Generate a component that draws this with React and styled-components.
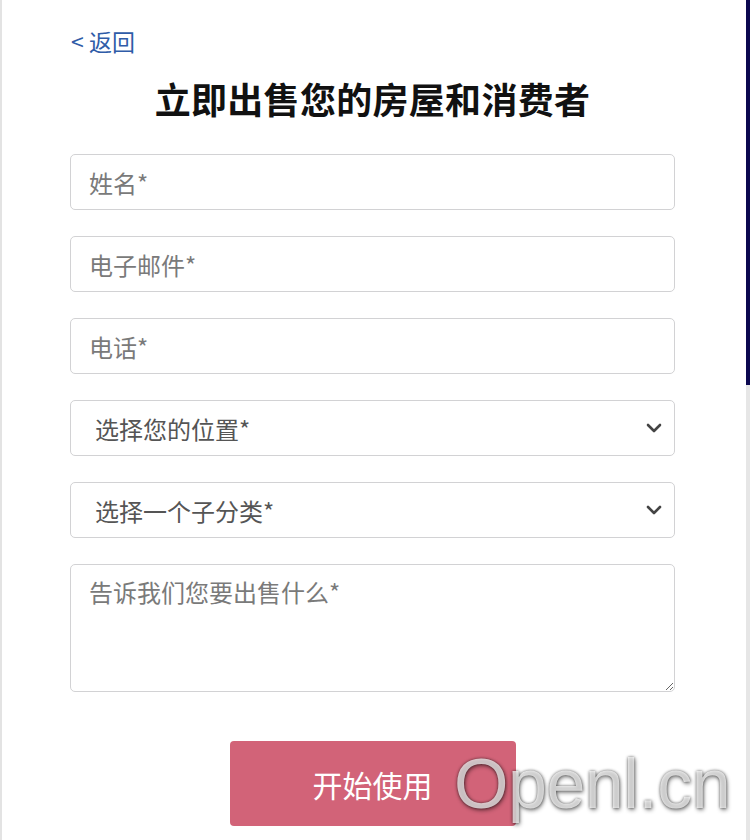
import React from "react";
import styled, { createGlobalStyle } from "styled-components";

const Global = createGlobalStyle`
  html, body { margin: 0; padding: 0; background: #fff; }
  body { font-family: "Noto Sans CJK SC", "Noto Sans", sans-serif; }
  * { box-sizing: border-box; }
`;

const Frame = styled.div`
  display: flex;
  width: 750px;
  height: 840px;
  overflow: hidden;
  position: relative;
  background: #fff;
  border-left: 2px solid #e3e3e3;
`;

const Main = styled.main`
  flex: 1;
  display: flex;
  flex-direction: column;
  padding: 28px 0 0 68px;
`;

const Rail = styled.div`
  width: 4px;
  display: flex;
  flex-direction: column;
`;

const RailSeg = styled.div`
  height: ${(p) => (p.$h ? `${p.$h}px` : "auto")};
  flex: ${(p) => (p.$h ? "none" : "1")};
  background: ${(p) => p.$c};
`;

const Back = styled.a`
  font-size: 23px;
  line-height: 26px;
  color: #2f5ca8;
  text-decoration: none;
  align-self: flex-start;
  margin-left: 1px;
`;

const Title = styled.h1`
  margin: 22px 0 0;
  width: 605px;
  text-align: center;
  font-size: 36px;
  line-height: 44px;
  font-weight: 700;
  color: #111;
  letter-spacing: 0.3px;
`;

const Form = styled.form`
  width: 605px;
  margin-top: 34px;
  display: flex;
  flex-direction: column;
  gap: 26px;
`;

const fieldBase = `
  width: 100%;
  border: 1px solid #d2d2d4;
  border-radius: 5px;
  background: #fff;
  font-family: "Noto Sans CJK SC", "Noto Sans", sans-serif;
  font-size: 24px;
  color: #444;
  outline: none;
`;

const Input = styled.input`
  ${fieldBase}
  height: 56px;
  padding: 0 18px;
  &::placeholder { color: #7a7a7a; }
`;

const SelectWrap = styled.div`
  position: relative;
  height: 56px;
`;

const Select = styled.select`
  ${fieldBase}
  height: 56px;
  padding: 0 40px 0 24px;
  appearance: none;
  color: #555;
`;

const Chevron = styled.svg`
  position: absolute;
  right: 13px;
  top: 22px;
  width: 16px;
  height: 12px;
  pointer-events: none;
`;

const TextArea = styled.textarea`
  ${fieldBase}
  height: 128px;
  padding: 11px 18px;
  line-height: 32px;
  resize: vertical;
  &::placeholder { color: #7a7a7a; }
`;

const Submit = styled.button`
  align-self: center;
  margin-top: 23px;
  width: 286px;
  height: 85px;
  border: none;
  border-radius: 4px;
  background: #d26378;
  color: #fff;
  font-family: "Noto Sans CJK SC", "Noto Sans", sans-serif;
  font-size: 30px;
  cursor: pointer;
`;

const Watermark = styled.div`
  position: absolute;
  left: 452px;
  top: 744px;
  font-family: "Liberation Sans", Arial, sans-serif;
  font-size: 70px;
  line-height: 80px;
  color: rgba(255, 255, 255, 0.72);
  text-shadow: 0 0 3px rgba(0, 0, 0, 0.55), 1px 2px 4px rgba(0, 0, 0, 0.45);
  letter-spacing: -0.5px;
  pointer-events: none;
`;

function Dropdown({ label }) {
  return (
    <SelectWrap>
      <Select defaultValue="">
        <option value="" disabled>
          {label}
        </option>
      </Select>
      <Chevron viewBox="0 0 16 12">
        <path d="M2 3 L8 9 L14 3" fill="none" stroke="#444" strokeWidth="2.6" strokeLinecap="round" strokeLinejoin="round" />
      </Chevron>
    </SelectWrap>
  );
}

export default function App() {
  return (
    <>
      <Global />
      <Frame>
        <Main>
          <Back href="#">&lt; 返回</Back>
          <Title>立即出售您的房屋和消费者</Title>
          <Form onSubmit={(e) => e.preventDefault()}>
            <Input placeholder="姓名*" />
            <Input placeholder="电子邮件*" />
            <Input placeholder="电话*" />
            <Dropdown label="选择您的位置*" />
            <Dropdown label="选择一个子分类*" />
            <TextArea placeholder="告诉我们您要出售什么*" />
            <Submit type="submit">开始使用</Submit>
          </Form>
        </Main>
        <Rail>
          <RailSeg $h={385} $c="#0c0850" />
          <RailSeg $c="#e6e6e6" />
        </Rail>
        <Watermark>Openl.cn</Watermark>
      </Frame>
    </>
  );
}
